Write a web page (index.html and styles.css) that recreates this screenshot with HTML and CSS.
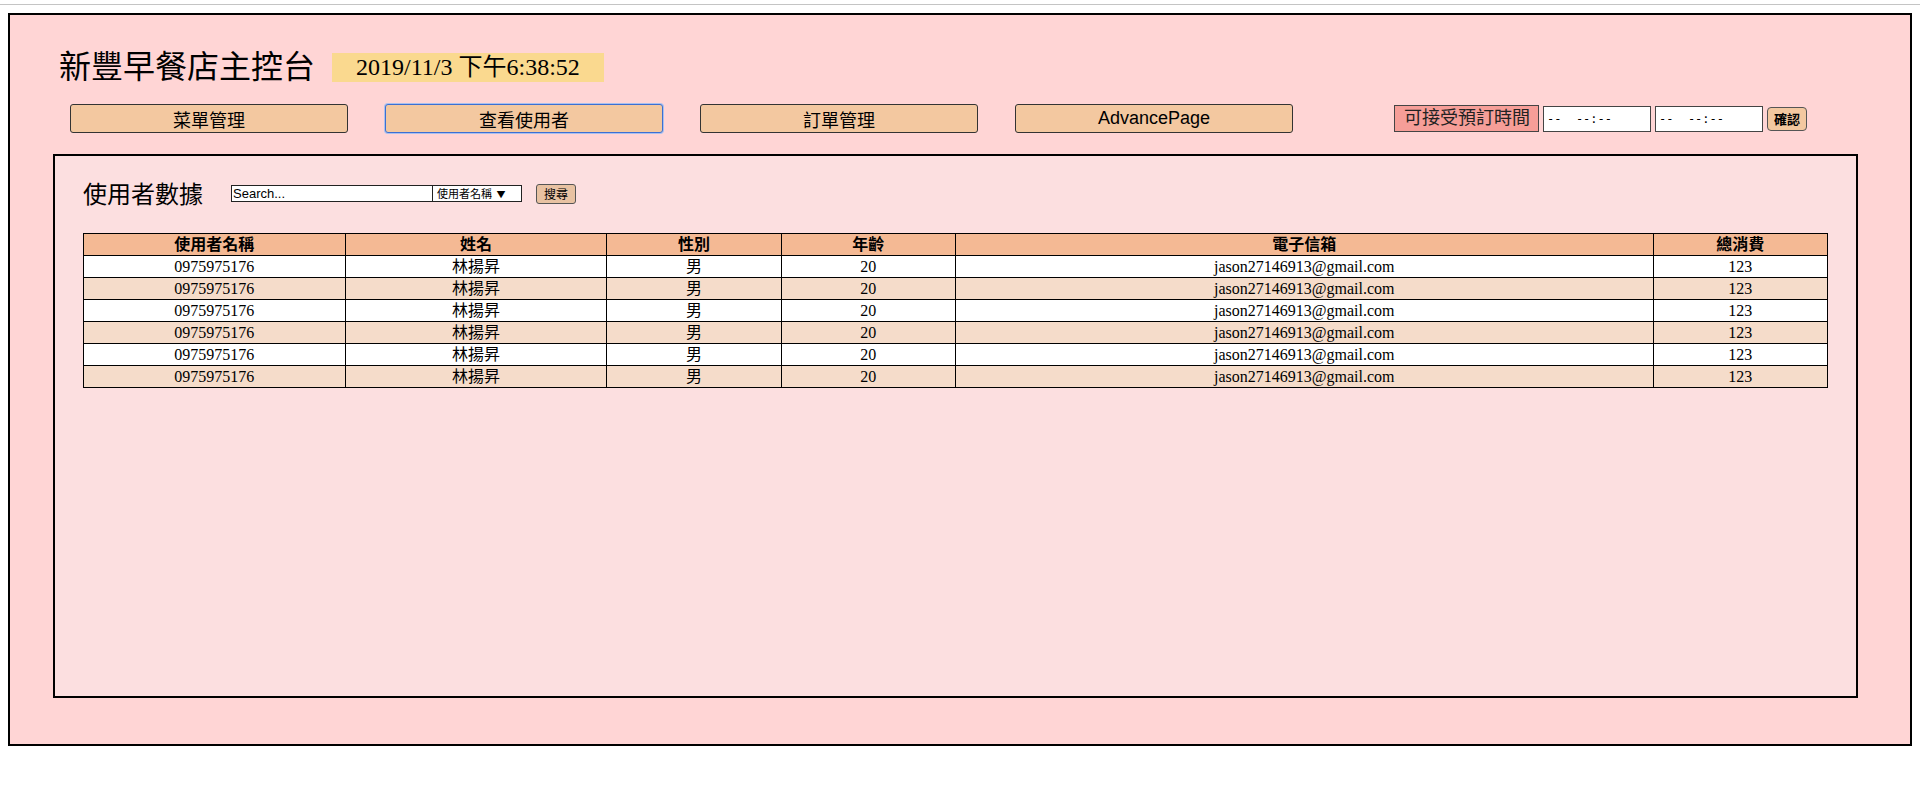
FILE: index.html
```html
<!DOCTYPE html>
<html lang="zh-Hant">
<head>
<meta charset="utf-8">
<title>新豐早餐店主控台</title>
<link rel="stylesheet" href="styles.css">
</head>
<body>
<div class="topline"></div>
<div class="panel">
  <div class="title-row">
    <h1 class="title">新豐早餐店主控台</h1>
    <span class="clock">2019/11/3 下午6:38:52</span>
  </div>
  <div class="nav-row">
    <button class="nav-btn">菜單管理</button>
    <button class="nav-btn active">查看使用者</button>
    <button class="nav-btn">訂單管理</button>
    <button class="nav-btn">AdvancePage</button>
    <div class="time-group">
      <span class="time-label">可接受預訂時間</span>
      <span class="time-input">-- &nbsp;--:--</span>
      <span class="time-input">-- &nbsp;--:--</span>
      <button class="confirm-btn">確認</button>
    </div>
  </div>
  <div class="content">
    <div class="content-head">
      <h2 class="section-title">使用者數據</h2>
      <div class="search">
        <input class="search-input" type="text" value="Search...">
        <span class="search-select">使用者名稱 <span class="caret">▼</span></span>
        <button class="search-btn">搜尋</button>
      </div>
    </div>
    <table class="users">
      <colgroup>
        <col class="c15"><col class="c15"><col class="c10"><col class="c10"><col class="c40"><col class="c10">
      </colgroup>
      <thead>
        <tr><th>使用者名稱</th><th>姓名</th><th>性別</th><th>年齡</th><th>電子信箱</th><th>總消費</th></tr>
      </thead>
      <tbody>
        <tr><td>0975975176</td><td>林揚昇</td><td>男</td><td>20</td><td>jason27146913@gmail.com</td><td>123</td></tr>
        <tr><td>0975975176</td><td>林揚昇</td><td>男</td><td>20</td><td>jason27146913@gmail.com</td><td>123</td></tr>
        <tr><td>0975975176</td><td>林揚昇</td><td>男</td><td>20</td><td>jason27146913@gmail.com</td><td>123</td></tr>
        <tr><td>0975975176</td><td>林揚昇</td><td>男</td><td>20</td><td>jason27146913@gmail.com</td><td>123</td></tr>
        <tr><td>0975975176</td><td>林揚昇</td><td>男</td><td>20</td><td>jason27146913@gmail.com</td><td>123</td></tr>
        <tr><td>0975975176</td><td>林揚昇</td><td>男</td><td>20</td><td>jason27146913@gmail.com</td><td>123</td></tr>
      </tbody>
    </table>
  </div>
</div>
</body>
</html>
```

FILE: styles.css
```css
html, body {
  margin: 0;
  padding: 0;
  background: #ffffff;
}
body {
  font-family: "Liberation Serif", "Noto Sans CJK TC", serif;
  color: #000;
}
.topline {
  height: 1px;
  margin-top: 4px;
  background: #c4c4c4;
}
.panel {
  margin: 8px;
  border: 2px solid #000;
  background: #ffd5d5;
  padding: 34px 52px 46px 43px;
}
.title-row {
  display: flex;
  align-items: center;
  padding-left: 6px;
  height: 36px;
}
.title {
  margin: 0;
  font-size: 32px;
  font-weight: normal;
  line-height: 36px;
  font-family: "Liberation Serif", "Noto Sans CJK TC", serif;
}
.clock {
  margin-left: 17px;
  background: #fad98f;
  font-size: 24px;
  line-height: 29px;
  height: 29px;
  padding: 0 24px;
}
.nav-row {
  display: flex;
  align-items: center;
  margin-top: 19px;
  padding-left: 17px;
  height: 29px;
}
.nav-btn {
  width: 278px;
  height: 29px;
  margin: 0 37px 0 0;
  padding: 0;
  background: #f3c8a0;
  border: 1px solid #333;
  border-radius: 3px;
  font-family: "Liberation Sans", "Noto Sans CJK TC", sans-serif;
  font-size: 18px;
  color: #000;
}
.nav-btn.active {
  border-color: #3d6fd2;
  box-shadow: 0 0 0 1px #a9c0ef;
}
.time-group {
  display: flex;
  align-items: center;
  margin-left: 64px;
}
.time-label {
  background: #f69e98;
  border: 1px solid #444;
  height: 25px;
  line-height: 25px;
  padding: 0 8px 0 9px;
  font-family: "Liberation Sans", "Noto Sans CJK TC", sans-serif;
  font-size: 18px;
  color: #222;
}
.time-input {
  margin-left: 4px;
  width: 103px;
  height: 24px;
  line-height: 24px;
  padding-left: 3px;
  background: #fff;
  border: 1px solid #444;
  font-family: "DejaVu Sans Mono", monospace;
  font-size: 12px;
  color: #000;
}
.confirm-btn {
  margin-left: 4px;
  width: 40px;
  height: 24px;
  padding: 0;
  background: #f3c8a0;
  border: 1px solid #555;
  border-radius: 4px;
  font-family: "Noto Sans CJK TC", sans-serif;
  font-size: 13px;
  font-weight: bold;
  color: #000;
}
.content {
  box-sizing: border-box;
  margin-top: 21px;
  height: 544px;
  border: 2px solid #000;
  background: #fcdfe0;
  padding: 24px 28px 0 28px;
}
.content-head {
  display: flex;
  align-items: center;
  height: 30px;
}
.section-title {
  margin: 0;
  font-size: 24px;
  font-weight: normal;
  line-height: 30px;
}
.search {
  display: flex;
  align-items: center;
  margin-left: 28px;
  margin-top: -3px;
}
.search-input {
  box-sizing: border-box;
  width: 202px;
  height: 17px;
  margin: 0;
  padding: 0 1px;
  border: 1px solid #222;
  background: #fff;
  font-family: "Liberation Sans", sans-serif;
  font-size: 13px;
  color: #000;
  outline: none;
}
.search-select {
  box-sizing: border-box;
  width: 89px;
  height: 17px;
  line-height: 15px;
  padding-left: 4px;
  border: 1px solid #222;
  border-left: none;
  background: #fff;
  font-family: "Noto Sans CJK TC", sans-serif;
  font-size: 11px;
}
.caret {
  font-size: 9px;
  margin-left: 2px;
}
.search-btn {
  margin-left: 14px;
  width: 40px;
  height: 20px;
  padding: 0;
  background: #e8c2a2;
  border: 1px solid #555;
  border-radius: 3px;
  font-family: "Noto Sans CJK TC", sans-serif;
  font-size: 12px;
  line-height: 16px;
  color: #000;
}
.users {
  margin-top: 23px;
  width: 100%;
  border-collapse: collapse;
  table-layout: fixed;
  font-size: 16px;
}
.c15 { width: 15%; }
.c10 { width: 10%; }
.c40 { width: 40%; }
.users th,
.users td {
  border: 1px solid #000;
  padding: 0;
  height: 21px;
  line-height: 21px;
  text-align: center;
  white-space: nowrap;
}
.users th {
  background: #f4b994;
  font-weight: bold;
}
.users tbody tr:nth-child(odd) td {
  background: #ffffff;
}
.users tbody tr:nth-child(even) td {
  background: #f5dcca;
}
```
